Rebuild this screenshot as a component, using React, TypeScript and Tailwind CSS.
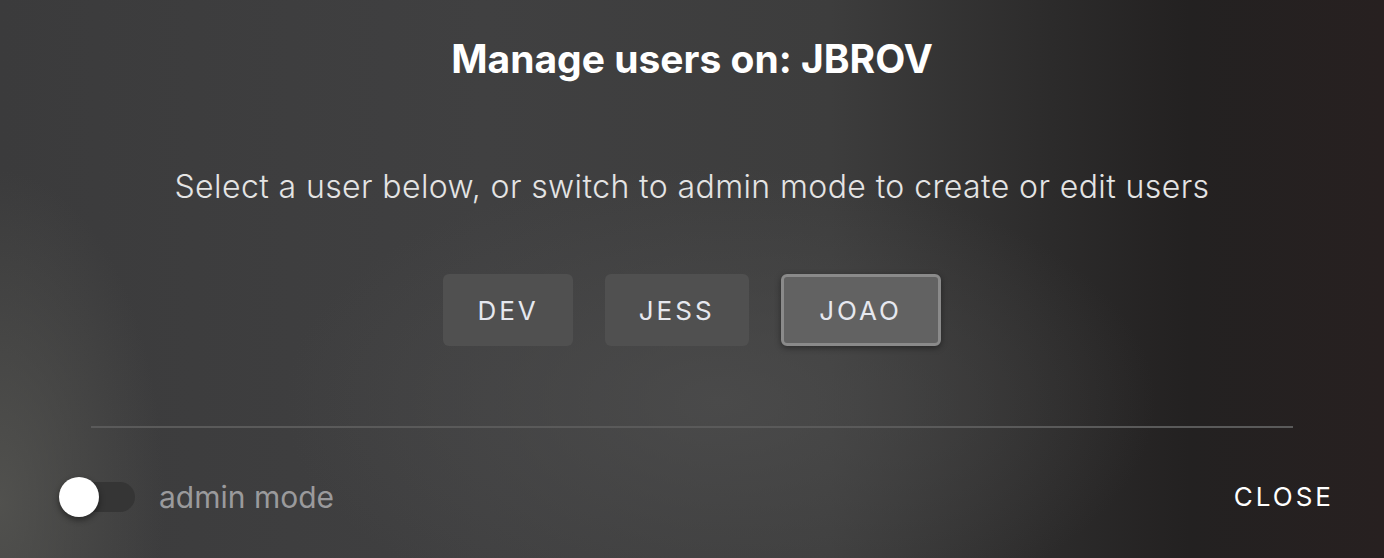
const USERS = ["DEV", "JESS", "JOAO"]

export default function App() {
  const selected = "JOAO"

  return (
    <div
      className="relative flex h-[558px] w-full flex-col overflow-hidden bg-[radial-gradient(ellipse_45%_60%_at_52%_72%,rgba(78,78,78,0.75),transparent_70%),radial-gradient(ellipse_14%_70%_at_0%_90%,rgba(88,88,84,0.75),transparent_85%),linear-gradient(90deg,#3b3b3c_0%,#404041_35%,#3d3d3d_60%,#2c2b2b_76%,#232121_86%,#272020_100%)] font-['Inter','Liberation_Sans',sans-serif]"
    >
      <h1 className="pt-[35px] text-center text-[39px] leading-[48px] font-bold text-white">
        Manage users on: JBROV
      </h1>

      <p className="mt-[84px] text-center text-[32px] leading-[40px] font-light tracking-[0.4px] text-[#e4e4e4]">
        Select a user below, or switch to admin mode to create or edit users
      </p>

      <div className="mt-[67px] flex justify-center gap-8">
        {USERS.map((name) =>
          name === selected ? (
            <button
              key={name}
              className="h-[72px] w-[160px] rounded-md border-[3px] border-[#8a8a8a] bg-[#626262] text-[26px] tracking-[3px] text-[#e6e8ef] shadow-[0_2px_6px_rgba(0,0,0,0.4)]"
            >
              {name}
            </button>
          ) : (
            <button
              key={name}
              className="h-[72px] rounded-md bg-[#505050] px-[34px] text-[26px] tracking-[3px] text-[#e6e8ef]"
            >
              {name}
            </button>
          )
        )}
      </div>

      <div className="mx-[91px] mt-[80px] h-[2px] bg-[#5a5a5a]" />

      <div className="mt-[49px] flex items-center justify-between pr-[50px] pl-[59px]">
        <div className="flex items-center gap-[22px]">
          {/* admin mode switch, off */}
          <div className="relative h-[36px] w-[78px]">
            <div className="absolute top-[3px] left-[12px] h-[30px] w-[64px] rounded-full bg-[#353535]" />
            <div className="absolute top-[-2px] left-0 h-[40px] w-[40px] rounded-full bg-white shadow-[0_3px_6px_rgba(0,0,0,0.45)]" />
          </div>
          <span className="text-[30px] leading-[36px] text-[#9a9a9c]">admin mode</span>
        </div>
        <button className="text-[26px] tracking-[3px] text-white">CLOSE</button>
      </div>
    </div>
  )
}
